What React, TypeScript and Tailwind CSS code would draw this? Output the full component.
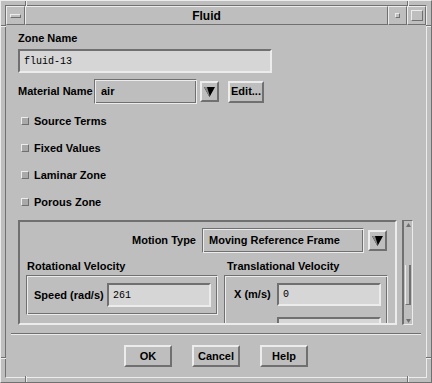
const raised = "border-2 border-t-[#ececec] border-l-[#ececec] border-b-[#707070] border-r-[#707070]";
const raised1 = "border border-t-[#ececec] border-l-[#ececec] border-b-[#707070] border-r-[#707070]";
const sunken = "border-2 border-t-[#707070] border-l-[#707070] border-b-[#ececec] border-r-[#ececec]";
const etched =
  "border border-t-[#707070] border-l-[#707070] border-b-[#ececec] border-r-[#ececec] shadow-[inset_1px_1px_0_#ececec,inset_-1px_-1px_0_#707070]";

function ArrowButton() {
  return (
    <div className={`${raised} w-[19px] h-[21px] flex items-center justify-center bg-[#bebebe]`}>
      <svg width="11" height="10" viewBox="0 0 11 10">
        <polygon points="0,0 11,0 5.5,10" fill="#000" />
        <polygon points="0,0 3,0 5.5,8 5.5,10" fill="#8a8a8a" />
      </svg>
    </div>
  );
}

function Button({ label, w }: { label: string; w: string }) {
  return (
    <div className={`${raised} ${w} h-[22px] flex items-center justify-center text-[11px] font-bold whitespace-nowrap`}>
      {label}
    </div>
  );
}

function Check({ label }: { label: string }) {
  return (
    <div className="h-[27px] flex items-center">
      <div className={`${raised1} ml-[3px] w-[8px] h-[8px] bg-[#a9a9a9]`} />
      <span className="ml-[5px] text-[11px] font-bold leading-[14px]">{label}</span>
    </div>
  );
}

function Field({ value, w, h }: { value: string; w: string; h: string }) {
  return (
    <div className={`${sunken} ${w} ${h} bg-[#d6d6d6] flex items-center pl-[4px] font-['Liberation_Mono',monospace] text-[10px]`}>
      {value}
    </div>
  );
}

// decorative splits of the window frame (resize corners)
function FrameMarks() {
  return (
    <>
      <div className="absolute left-[24px] top-0 w-[2px] h-[5px] border-l border-l-[#707070] border-r border-r-[#ececec]" />
      <div className="absolute left-[406px] top-0 w-[2px] h-[5px] border-l border-l-[#707070] border-r border-r-[#ececec]" />
      <div className="absolute left-[24px] bottom-0 w-[2px] h-[6px] border-l border-l-[#707070] border-r border-r-[#ececec]" />
      <div className="absolute left-[406px] bottom-0 w-[2px] h-[6px] border-l border-l-[#707070] border-r border-r-[#ececec]" />
      <div className="absolute left-0 top-[24px] w-[5px] h-[2px] border-t border-t-[#707070] border-b border-b-[#ececec]" />
      <div className="absolute right-0 top-[24px] w-[5px] h-[2px] border-t border-t-[#707070] border-b border-b-[#ececec]" />
      <div className="absolute left-0 top-[356px] w-[5px] h-[2px] border-t border-t-[#707070] border-b border-b-[#ececec]" />
      <div className="absolute right-0 top-[356px] w-[5px] h-[2px] border-t border-t-[#707070] border-b border-b-[#ececec]" />
    </>
  );
}

export default function App() {
  return (
    <div className="relative w-[432px] h-[383px] bg-[#bebebe] border border-t-[#ececec] border-l-[#ececec] border-b-[#707070] border-r-[#707070] p-[4px] font-['Liberation_Sans',Arial,sans-serif] text-black">
      <FrameMarks />
      <div className="h-full flex flex-col border border-t-[#707070] border-l-[#707070] border-b-[#ececec] border-r-[#ececec]">
        {/* Title bar */}
        <div className="flex h-[19px] shrink-0">
          <div className={`${raised1} w-[19px] flex items-center justify-center`}>
            <div className={`${raised1} w-[11px] h-[4px]`} />
          </div>
          <div className={`${raised1} flex-1 flex items-center justify-center text-[12px] font-bold`}>Fluid</div>
          <div className={`${raised1} w-[19px] flex items-center justify-center`}>
            <div className={`${raised1} w-[5px] h-[5px]`} />
          </div>
          <div className={`${raised1} w-[19px] flex items-center justify-center`}>
            <div className={`${raised1} w-[12px] h-[11px]`} />
          </div>
        </div>

        {/* Client area */}
        <div className="flex-1 flex flex-col px-[12px]">
          <div className="mt-[6px] text-[11px] font-bold leading-[14px]">Zone Name</div>
          <div className="mt-[4px]">
            <Field value="fluid-13" w="w-[254px]" h="h-[24px]" />
          </div>

          <div className="mt-[6px] h-[25px] flex items-center">
            <span className="w-[76px] text-[11px] font-bold whitespace-nowrap">Material Name</span>
            <div className={`${etched} w-[103px] h-[25px] flex items-center pl-[6px] text-[11px] font-bold`}>air</div>
            <div className="ml-[3px]">
              <ArrowButton />
            </div>
            <div className="ml-[9px]">
              <Button label="Edit..." w="w-[36px]" />
            </div>
          </div>

          <div className="mt-[3px] flex flex-col">
            <Check label="Source Terms" />
            <Check label="Fixed Values" />
            <Check label="Laminar Zone" />
            <Check label="Porous Zone" />
          </div>

          {/* Scrolled panel */}
          <div className="mt-[5px] flex">
            <div className={`${sunken} w-[379px] h-[105px] overflow-hidden`}>
              <div className="mt-[6px] h-[25px] flex items-center justify-end pr-[8px]">
                <span className="text-[11px] font-bold whitespace-nowrap">Motion Type</span>
                <div className={`${etched} ml-[6px] w-[162px] h-[25px] flex items-center pl-[6px] text-[11px] font-bold whitespace-nowrap`}>
                  Moving Reference Frame
                </div>
                <div className="ml-[4px]">
                  <ArrowButton />
                </div>
              </div>

              <div className="mt-[6px] flex">
                <div className="ml-[6px] w-[192px] flex flex-col">
                  <div className="pl-[1px] text-[11px] font-bold leading-[14px] whitespace-nowrap">Rotational Velocity</div>
                  <div className={`${etched} mt-[2px] h-[40px] flex items-center`}>
                    <span className="pl-[7px] w-[80px] text-[11px] font-bold whitespace-nowrap">Speed (rad/s)</span>
                    <Field value="261" w="w-[104px]" h="h-[24px]" />
                  </div>
                </div>
                <div className="ml-[6px] w-[164px] flex flex-col">
                  <div className="pl-[3px] text-[11px] font-bold leading-[14px] whitespace-nowrap">Translational Velocity</div>
                  <div className={`${etched} mt-[2px] h-[70px] flex flex-col pt-[7px]`}>
                    <div className="flex items-center">
                      <span className="pl-[9px] w-[52px] text-[11px] font-bold whitespace-nowrap">X (m/s)</span>
                      <Field value="0" w="w-[104px]" h="h-[23px]" />
                    </div>
                    <div className="flex items-center mt-[11px]">
                      <span className="w-[52px]" />
                      <Field value="" w="w-[104px]" h="h-[23px]" />
                    </div>
                  </div>
                </div>
              </div>
            </div>

            {/* Scrollbar */}
            <div className="ml-[5px] w-[11px] h-[105px] flex flex-col border border-t-[#707070] border-l-2 border-l-[#707070] border-b-[#ececec] border-r-[#ececec]">
              <div className="h-[7px] flex items-center justify-center">
                <svg width="5" height="4" viewBox="0 0 5 4">
                  <polygon points="2.5,0 5,4 0,4" fill="#707070" />
                </svg>
              </div>
              <div className="h-[37px]" />
              <div className="h-[40px] border-l border-l-[#ececec] border-r-2 border-r-[#707070] border-b border-b-[#707070] mx-[1px]" />
              <div className="flex-1" />
              <div className="h-[7px] flex items-center justify-center">
                <svg width="5" height="4" viewBox="0 0 5 4">
                  <polygon points="0,0 5,0 2.5,4" fill="#707070" />
                </svg>
              </div>
            </div>
          </div>

          <div className="mt-[8px] -mx-[7px] h-[2px] border-t border-t-[#707070] border-b border-b-[#ececec]" />

          <div className="mt-[10px] flex justify-center gap-[20px]">
            <Button label="OK" w="w-[48px]" />
            <Button label="Cancel" w="w-[48px]" />
            <Button label="Help" w="w-[48px]" />
          </div>
        </div>
      </div>
    </div>
  );
}
